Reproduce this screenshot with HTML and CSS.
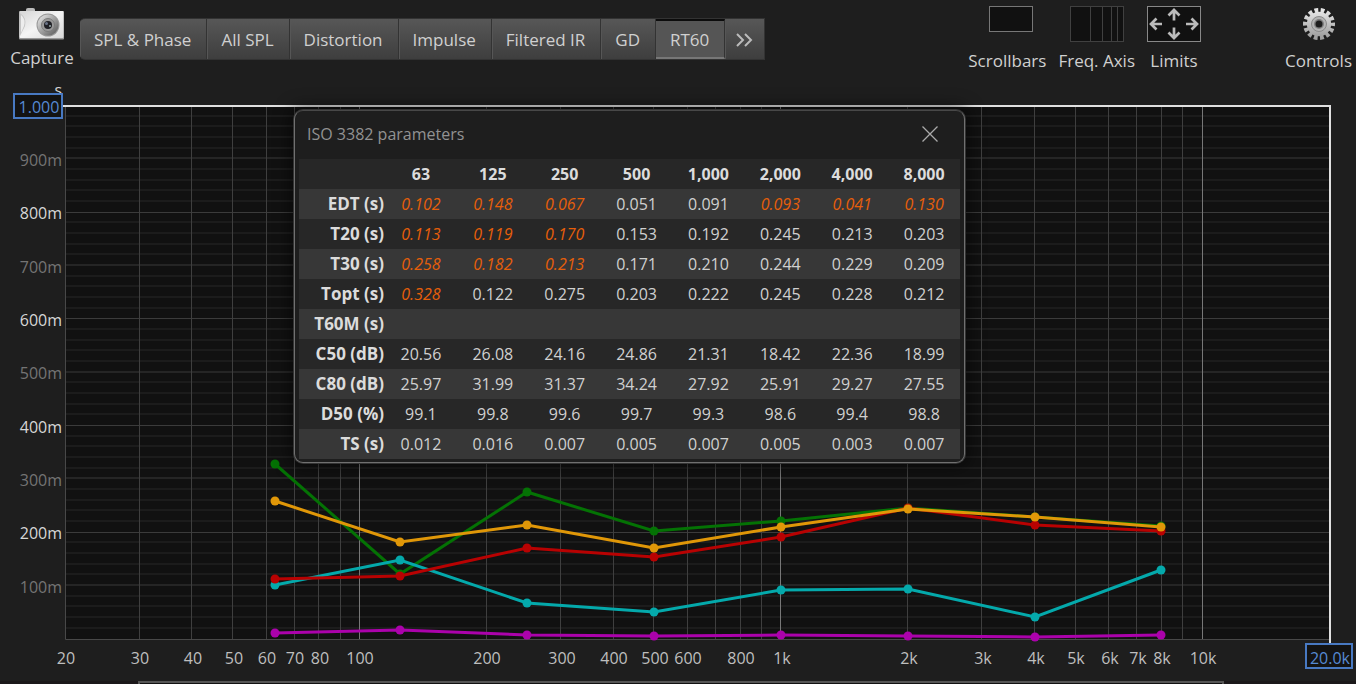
FILE: index.html
```html
<!DOCTYPE html>
<html lang="en">
<head>
<meta charset="utf-8">
<title>RT60</title>
<link rel="stylesheet" href="styles.css">
</head>
<body>
<div class="app">
  <header class="toolbar">
    <button class="tool capture" type="button">
      <svg class="camera-icon" width="46" height="34" viewBox="0 0 46 34" aria-hidden="true">
        <defs>
          <linearGradient id="cam" x1="0" y1="0" x2="1" y2="1"><stop offset="0" stop-color="#d5d5d5"/><stop offset=".5" stop-color="#f4f4f4"/><stop offset="1" stop-color="#d8d8d8"/></linearGradient>
          <linearGradient id="lens" x1="0" y1="0" x2="1" y2="1"><stop offset="0" stop-color="#f0f0f0"/><stop offset=".5" stop-color="#a0a0a0"/><stop offset="1" stop-color="#555"/></linearGradient>
        </defs>
        <path d="M7 5V3.500q0-1.500 2-1.500h5q2 0 2 1.500V5z" fill="#bdbdbd"/>
        <rect x="0" y="5" width="45" height="28.500" rx="1" fill="#999"/>
        <rect x=".5" y="5" width="44" height="27" rx="1" fill="url(#cam)"/>
        <path d="M1 7q7 5 5 13l-5 10z" fill="#c4c4c4"/>
        <path d="M2 9q5 4 3 11l-3 7z" fill="#ededed"/>
        <circle cx="29" cy="19" r="11.500" fill="#999"/>
        <circle cx="29" cy="19" r="10.500" fill="url(#lens)"/>
        <circle cx="29" cy="19" r="6.500" fill="#999" stroke="#7c7c7c"/>
        <circle cx="29" cy="19" r="4" fill="#202026"/>
        <circle cx="27.500" cy="17.500" r="1.500" fill="#6a7488"/>
        <circle cx="31" cy="20" r="1" fill="#9aa"/>
      </svg>
      <span>Capture</span>
    </button>
    <nav class="tabs">
      <button class="tab" type="button">SPL &amp; Phase</button>
      <button class="tab" type="button">All SPL</button>
      <button class="tab" type="button">Distortion</button>
      <button class="tab" type="button">Impulse</button>
      <button class="tab" type="button">Filtered IR</button>
      <button class="tab" type="button">GD</button>
      <button class="tab active" type="button" aria-pressed="true">RT60</button>
      <button class="tab" type="button" aria-label="More graphs">
        <svg width="17" height="14" viewBox="0 0 17 14" aria-hidden="true"><path d="M1 1l6 6-6 6M9 1l6 6-6 6" fill="none" stroke="#bbb" stroke-width="2"/></svg>
      </button>
    </nav>
    <div class="options">
      <button class="tool" type="button">
        <svg class="tool-icon" width="54" height="36" viewBox="0 0 54 36" aria-hidden="true"><rect x="9.500" y=".5" width="43" height="25" fill="#111" stroke="#777"/></svg>
        <span>Scrollbars</span>
      </button>
      <button class="tool" type="button">
        <svg class="tool-icon" width="54" height="36" viewBox="0 0 54 36" aria-hidden="true"><rect x=".5" y=".5" width="53" height="35" fill="#111" stroke="#404040"/><path d="M20.500 1v34M32.500 1v34M41.500 1v34M47.500 1v34" stroke="#404040"/></svg>
        <span>Freq. Axis</span>
      </button>
      <button class="tool" type="button">
        <svg class="tool-icon" width="54" height="36" viewBox="0 0 54 36" aria-hidden="true"><rect x=".5" y=".5" width="53" height="35" fill="#111" stroke="#888"/><path d="M27 14.500V5M21.500 9.500L27 4l5.500 5.500M27 21.500V31M21.500 26.500L27 32l5.500-5.500M15 18H4.500M9.500 12.500L4 18l5.500 5.500M39 18h10.500M44.500 12.500L50 18l-5.500 5.500" fill="none" stroke="#bbb" stroke-width="2.700"/></svg>
        <span>Limits</span>
      </button>
      <button class="tool controls" type="button">
        <svg class="tool-icon" width="36" height="36" viewBox="0 0 36 36" aria-hidden="true">
          <defs><linearGradient id="gear" x1="0" y1="0" x2="0" y2="1"><stop offset="0" stop-color="#e4e4e4"/><stop offset="1" stop-color="#a0a0a0"/></linearGradient></defs>
          <circle cx="18" cy="18" r="13.500" fill="none" stroke="url(#gear)" stroke-width="5" stroke-dasharray="3.660 2.400" stroke-dashoffset="1.800"/>
          <circle cx="18" cy="18" r="12.200" fill="url(#gear)"/>
          <circle cx="18" cy="18" r="7.500" fill="#b4b4b4" stroke="#8a8a8a"/>
          <circle cx="18" cy="18" r="5" fill="#808080"/>
          <circle cx="18" cy="18" r="3.500" fill="#1e1e1e"/>
        </svg>
        <span>Controls</span>
      </button>
    </div>
  </header>

  <main class="graph">
    <svg id="plot" class="plot" viewBox="0 84 1356 597" role="img" aria-label="RT60 against frequency"></svg>
    <section class="dialog" aria-labelledby="dialog-title">
      <div class="dialog-bar">
        <h2 id="dialog-title" class="dialog-title">ISO 3382 parameters</h2>
        <button class="close" type="button" aria-label="Close">
          <svg width="16" height="16" viewBox="0 0 16 16" aria-hidden="true"><path d="M.5 .5l15 15M15.500 .5l-15 15" stroke="#aaa" stroke-width="1.300"/></svg>
        </button>
      </div>
      <table class="params">
        <thead><tr><td></td><th scope="col">63</th><th scope="col">125</th><th scope="col">250</th><th scope="col">500</th><th scope="col">1,000</th><th scope="col">2,000</th><th scope="col">4,000</th><th scope="col">8,000</th></tr></thead>
        <tbody>
          <tr><th scope="row">EDT (s)</th><td class="low">0.102</td><td class="low">0.148</td><td class="low">0.067</td><td>0.051</td><td>0.091</td><td class="low">0.093</td><td class="low">0.041</td><td class="low">0.130</td></tr>
          <tr><th scope="row">T20 (s)</th><td class="low">0.113</td><td class="low">0.119</td><td class="low">0.170</td><td>0.153</td><td>0.192</td><td>0.245</td><td>0.213</td><td>0.203</td></tr>
          <tr><th scope="row">T30 (s)</th><td class="low">0.258</td><td class="low">0.182</td><td class="low">0.213</td><td>0.171</td><td>0.210</td><td>0.244</td><td>0.229</td><td>0.209</td></tr>
          <tr><th scope="row">Topt (s)</th><td class="low">0.328</td><td>0.122</td><td>0.275</td><td>0.203</td><td>0.222</td><td>0.245</td><td>0.228</td><td>0.212</td></tr>
          <tr><th scope="row">T60M (s)</th><td></td><td></td><td></td><td></td><td></td><td></td><td></td><td></td></tr>
          <tr><th scope="row">C50 (dB)</th><td>20.56</td><td>26.08</td><td>24.16</td><td>24.86</td><td>21.31</td><td>18.42</td><td>22.36</td><td>18.99</td></tr>
          <tr><th scope="row">C80 (dB)</th><td>25.97</td><td>31.99</td><td>31.37</td><td>34.24</td><td>27.92</td><td>25.91</td><td>29.27</td><td>27.55</td></tr>
          <tr><th scope="row">D50 (%)</th><td>99.1</td><td>99.8</td><td>99.6</td><td>99.7</td><td>99.3</td><td>98.6</td><td>99.4</td><td>98.8</td></tr>
          <tr><th scope="row">TS (s)</th><td>0.012</td><td>0.016</td><td>0.007</td><td>0.005</td><td>0.007</td><td>0.005</td><td>0.003</td><td>0.007</td></tr>
        </tbody>
      </table>
    </section>
  </main>
  <footer class="lower"><div class="lower-panel"></div></footer>
</div>
<script src="plot.js"></script>
</body>
</html>
```
FILE: styles.css
```css
* { box-sizing: border-box; }

body {
  margin: 0;
  background: #1e1e1e;
  color: #d0d0d0;
  font: 16px/20px "Open Sans", "Noto Sans", sans-serif;
}

button {
  margin: 0;
  padding: 0;
  border: 0;
  background: none;
  color: inherit;
  font: inherit;
}

.app {
  display: flex;
  flex-direction: column;
  min-height: 100vh;
  overflow: hidden;
}

.toolbar {
  display: flex;
  align-items: flex-start;
  height: 84px;
  padding-right: 4px;
  font-size: 17px;
}

.tool {
  display: flex;
  flex-direction: column;
  align-items: center;
  white-space: nowrap;
}

.tool-icon { display: block; margin-bottom: 9px; }

.capture { width: 80px; padding: 6px 0 0 4px; gap: 8px; }

.tabs {
  display: flex;
  height: 42px;
  margin-top: 18px;
  border: 1px solid #333;
  border-left: 0;
  border-radius: 5px 0 0 5px;
  background: linear-gradient(#575757, #3e3e3e);
  overflow: hidden;
}

.tab {
  padding: 1px 15px 0 14px;
  border-right: 1px solid #333;
  box-shadow: inset 1px 0 #565656;
  white-space: nowrap;
}

.tab:last-child { display: flex; align-items: center; padding: 2px 11px 0; border-right: 0; }

.tab.active {
  border-top: 2px solid #0c0c0c;
  border-bottom: 2px solid #777;
  background: #555;
}

.options {
  display: flex;
  gap: 12px;
  margin-left: auto;
  padding-top: 6px;
}

.controls { margin-left: 72px; }

.graph { position: relative; }

.plot { display: block; width: 100%; height: auto; }

.plot-area { fill: #111; }
.grid-fine { stroke: #1c1c1c; stroke-width: 2; }
.grid-mid { stroke: #252525; stroke-width: 2; }
.grid-major { stroke: #3b3b3b; }
.grid-freq { stroke: #3f3f3f; }
.grid-decade { stroke: #777; }
.axis { fill: none; stroke: #484848; }
.limit { fill: none; stroke: #e0e0e0; stroke-width: 2; }
.label { fill: #bebebe; }
.label-minor { fill: #747474; }
.label-major { fill: #d6d6d6; font-weight: 500; }
.end { text-anchor: end; }
.middle { text-anchor: middle; }
.limit-box { fill: #131313; stroke: #4879c2; stroke-width: 2; }
.limit-text { fill: #5689d2; }
.series { fill: none; stroke-width: 3; }

.dialog {
  position: absolute;
  top: 26px;
  left: 294px;
  width: 671px;
  padding: 0 4px 3px;
  border: 1px solid #707070;
  border-top-color: #484848;
  border-radius: 9px;
  background: #1e1e1e;
  box-shadow: 0 0 0 1px #333, 0 0 16px 4px rgba(0, 0, 0, 0.5);
}

.dialog-bar {
  display: flex;
  align-items: center;
  justify-content: space-between;
  height: 48px;
  padding: 0 17px 3px 8px;
}

.dialog-title { margin: 0; color: #929292; font-size: 16px; font-weight: 400; }

.close { display: flex; padding: 5px; }

.params { width: 100%; border-collapse: collapse; table-layout: fixed; }
.params tr { height: 30px; background: #272727; }
.params tbody tr:nth-child(odd) { background: #373737; }
.params th, .params td { padding: 0; text-align: center; }
.params th { color: #dcdcdc; font-weight: 700; }
.params thead td { width: 86px; }
.params tbody th { padding-right: 1px; font-size: 17px; text-align: right; white-space: nowrap; }
.params .low { color: #e65f0a; font-style: italic; }

.lower { display: flex; flex: 1; min-height: 3px; padding: 0 132px 0 138px; background: #1b181a; }

.lower-panel { flex: 1; border: 2px solid #555; border-bottom: 0; background: #111; }
```
FILE: plot.js
```js
const LEFT = 65;
const RIGHT = 1329;
const TOP = 105.5;
const BOTTOM = 639;
const plot = document.getElementById("plot");

const xOf = (hz) => LEFT + (RIGHT - LEFT) * Math.log10(hz / 20) / 3;
const yOf = (sec) => BOTTOM - (BOTTOM - TOP) * sec;
const snap = (v) => Math.floor(v) + 0.5;

function draw(tag, attrs, text) {
  const node = document.createElementNS("http://www.w3.org/2000/svg", tag);
  for (const key in attrs) node.setAttribute(key, attrs[key]);
  if (text !== undefined) node.textContent = text;
  plot.appendChild(node);
}

draw("rect", { class: "plot-area", x: LEFT, y: TOP, width: RIGHT - LEFT, height: BOTTOM - TOP });

// Time grid: a line every 20 ms, stronger at 100 ms and 200 ms
for (let ms = 20; ms < 1000; ms += 20) {
  const kind = ms % 200 === 0 ? "grid-major" : ms % 100 === 0 ? "grid-mid" : "grid-fine";
  const offset = kind === "grid-major" ? 0 : 0.5;
  const y = snap(yOf(ms / 1000)) - offset;
  draw("path", { class: kind, d: `M${LEFT} ${y}H${RIGHT}` });
}

// Logarithmic frequency grid
for (const decade of [10, 100, 1000, 10000]) {
  for (let n = 1; n < 10; n++) {
    const hz = n * decade;
    if (hz <= 20 || hz >= 20000) continue;
    draw("path", { class: n === 1 ? "grid-decade" : "grid-freq", d: `M${snap(xOf(hz))} ${TOP}V${BOTTOM}` });
  }
}

draw("path", { class: "axis", d: `M${LEFT + 0.5} ${TOP}V${BOTTOM + 0.5}H${RIGHT}` });
draw("path", { class: "limit", d: `M62 106H${RIGHT + 1}V644` });

const bands = [63, 125, 250, 500, 1000, 2000, 4000, 8000];
const series = [
  ["#047204", [0.328, 0.122, 0.275, 0.203, 0.222, 0.245, 0.228, 0.212]],
  ["#04a9ab", [0.102, 0.148, 0.067, 0.051, 0.091, 0.093, 0.041, 0.130]],
  ["#b80202", [0.113, 0.119, 0.170, 0.153, 0.192, 0.245, 0.213, 0.203]],
  ["#e09708", [0.258, 0.182, 0.213, 0.171, 0.210, 0.244, 0.229, 0.209]],
  ["#ab02ab", [0.012, 0.016, 0.007, 0.005, 0.007, 0.005, 0.003, 0.007]]
];
for (const [color, values] of series) {
  const points = values.map((v, i) => [Math.round(xOf(bands[i])), Math.round(yOf(v))]);
  draw("polyline", { class: "series", stroke: color, points: points.join(" ") });
  for (const [cx, cy] of points) draw("circle", { cx, cy, r: 4.5, fill: color });
}

draw("text", { class: "label-major end", x: 62, y: 96 }, "s");
for (let ms = 100; ms < 1000; ms += 100) {
  const kind = ms % 200 === 0 ? "label-major" : "label-minor";
  draw("text", { class: kind + " end", x: 62, y: Math.round(yOf(ms / 1000)) + 7 }, ms + "m");
}

for (const hz of [20, 30, 40, 50, 60, 70, 80, 100, 200, 300, 400, 500, 600, 800,
  1000, 2000, 3000, 4000, 5000, 6000, 7000, 8000, 10000]) {
  const text = hz < 1000 ? String(hz) : hz / 1000 + "k";
  draw("text", { class: "label middle", x: Math.round(xOf(hz)) + 1, y: 664 }, text);
}

draw("rect", { class: "limit-box", x: 14, y: 94, width: 48, height: 24 });
draw("text", { class: "limit-text middle", x: 39, y: 113 }, "1.000");
draw("rect", { class: "limit-box", x: 1306, y: 644, width: 46, height: 24 });
draw("text", { class: "limit-text middle", x: 1330, y: 664 }, "20.0k");
```
